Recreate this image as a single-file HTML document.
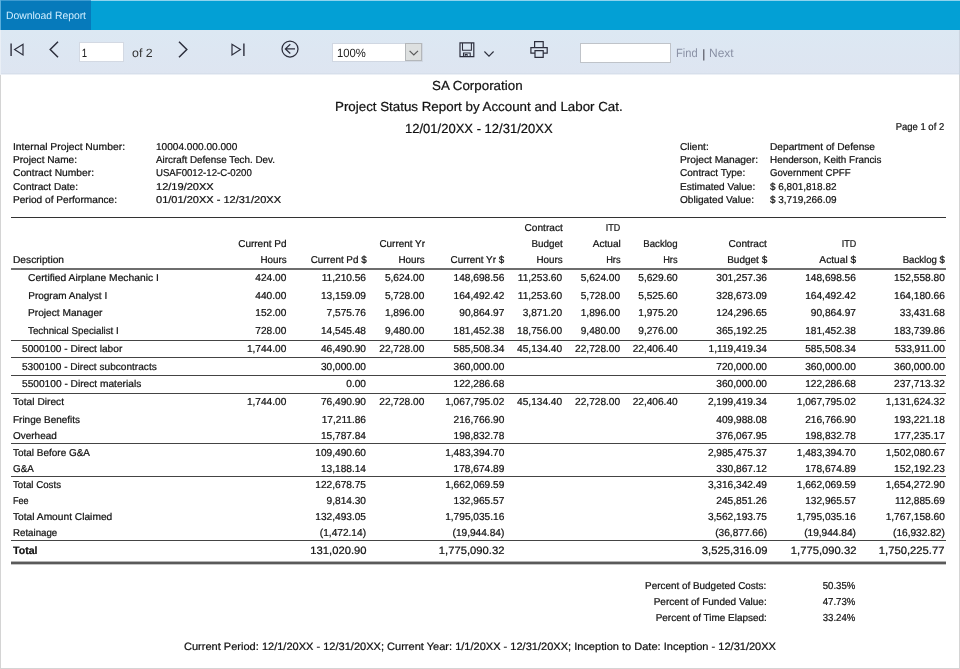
<!DOCTYPE html>
<html><head><meta charset="utf-8"><title>Report</title>
<style>
html,body{margin:0;padding:0;}
body{width:960px;height:669px;position:relative;overflow:hidden;background:#fff;font-family:"Liberation Sans",sans-serif;text-rendering:geometricPrecision;}
.t{position:absolute;white-space:nowrap;line-height:20px;height:20px;-webkit-text-stroke:0.22px currentColor;}
.hl{position:absolute;}
.abs{position:absolute;}
#frame{position:absolute;left:0;top:75px;width:958px;height:593px;border:1px solid #d4d4d4;border-top:none;}
#bar{position:absolute;left:0;top:0;width:960px;height:30px;background:#03a0d5;border-top:1px solid #8ed3ee;box-sizing:border-box;}
#tab{position:absolute;left:1px;top:0;width:90px;height:30px;background:#067abb;border-top:1px solid #3f9bd0;box-sizing:border-box;}
#tool{position:absolute;left:1px;top:30px;width:958px;height:44px;background:linear-gradient(#dce8f3,#dee5f1);}
.inp{position:absolute;background:#fff;border:1px solid #c4c8d0;box-sizing:border-box;}
svg{position:absolute;overflow:visible;}
#wrap{position:absolute;left:0;top:0;width:960px;height:669px;will-change:transform;}
.ns{-webkit-text-stroke:0 !important;}
</style></head><body><div id="wrap">
<div id="frame"></div>
<div id="bar"></div><div id="tab"></div><div id="tool"></div>
<div class="abs" style="left:0;top:0;width:1px;height:30px;background:#5aaedb"></div><div class="abs" style="left:0;top:30px;width:1px;height:45px;background:#eaeff6"></div><div class="abs" style="left:959px;top:30px;width:1px;height:45px;background:#ccd5e0"></div>

<div class="t ns" style="top:6.00px;font-size:10.5px;color:#cfeeff;left:6.00px;transform:scaleX(0.9861);transform-origin:0 50%;">Download Report</div>
<div class="abs" style="left:1px;top:73px;width:958px;height:1px;background:#d7dfeb"></div>
<div class="abs" style="left:1px;top:74px;width:958px;height:1px;background:#ecf0f6"></div>
<svg style="left:9px;top:42px" width="16" height="16" viewBox="0 0 16 16"><path d="M2.1 1.5v12.4" stroke="#2c2e3c" stroke-width="1.4" fill="none"/><path d="M14 2.3v10.6L5.6 7.6z" stroke="#2c2e3c" stroke-width="1.2" fill="none" stroke-linejoin="miter"/></svg>
<svg style="left:48px;top:40px" width="12" height="18" viewBox="0 0 12 18"><path d="M10 1.8L2.2 9.5l7.8 7.7" stroke="#2c2e3c" stroke-width="1.5" fill="none"/></svg>
<div class="inp" style="left:79px;top:42px;width:45px;height:20px;border-color:#d3d9e3"></div>
<div class="t" style="top:43.00px;font-size:12px;color:#222;left:82.00px;transform:scaleX(0.7327);transform-origin:0 50%;">1</div>
<div class="t ns" style="top:43.00px;font-size:12px;color:#333;left:131.70px;transform:scaleX(1.0334);transform-origin:0 50%;">of 2</div>
<svg style="left:177px;top:40px" width="12" height="18" viewBox="0 0 12 18"><path d="M2 1.8l7.8 7.7L2 17.2" stroke="#2c2e3c" stroke-width="1.5" fill="none"/></svg>
<svg style="left:230px;top:42px" width="16" height="16" viewBox="0 0 16 16"><path d="M13.9 1.5v12.4" stroke="#2c2e3c" stroke-width="1.4" fill="none"/><path d="M2 2.3v10.6l8.4-5.3z" stroke="#2c2e3c" stroke-width="1.2" fill="none"/></svg>
<svg style="left:281.3px;top:40.3px" width="18" height="18" viewBox="0 0 18 18"><circle cx="9" cy="9" r="8" stroke="#2c2e3c" stroke-width="1.25" fill="none"/><path d="M14 8.9H4.6M9.3 4.3L4.4 8.9l4.9 4.6" stroke="#2c2e3c" stroke-width="1.25" fill="none"/></svg>
<div class="inp" style="left:332px;top:43px;width:91px;height:19px;border-color:#d0d7e2"></div>
<div class="abs" style="left:405px;top:43px;width:17px;height:18px;background:#dde0e0;border:1px solid #b4b7ba;box-sizing:border-box"></div>
<svg style="left:409px;top:49.6px" width="10" height="6" viewBox="0 0 10 6"><path d="M0.6 0.8l4.2 4.2L9 0.8" stroke="#5a5a5a" stroke-width="1.2" fill="none"/></svg>
<div class="t ns" style="top:43.00px;font-size:12px;color:#222;left:337.00px;transform:scaleX(0.9418);transform-origin:0 50%;">100%</div>
<svg style="left:458.5px;top:41.7px" width="16" height="16" viewBox="0 0 16 16"><path d="M1 0.9h13.8v13.7H1z" stroke="#2c2e3c" stroke-width="1.2" fill="none"/><path d="M3.5 0.9v7.3h8.9V0.9M4.5 14.6v-3.7h6.7v3.7M6.2 14.6v-2.2h1.9v2.2" stroke="#2c2e3c" stroke-width="1.05" fill="none"/></svg>
<svg style="left:484px;top:50.6px" width="10" height="6" viewBox="0 0 10 6"><path d="M0.4 0.5l4.6 4.7L9.6 0.5" stroke="#2c2e3c" stroke-width="1.1" fill="none"/></svg>
<svg style="left:530px;top:41px" width="18" height="17" viewBox="0 0 18 17"><path d="M4.6 6.3V0.7h8.6v5.6M5 12.2H0.9V6.6h16.3v5.6H13M5 9.6h8.2v6.7H5z" stroke="#2c2e3c" stroke-width="1.2" fill="none"/></svg>
<div class="inp" style="left:580px;top:43px;width:91px;height:20px;border-color:#bfc3c9"></div>
<div class="t ns" style="top:43.00px;font-size:12px;color:#8a91a5;left:675.80px;transform:scaleX(0.9253);transform-origin:0 50%;">Find</div>
<div class="t ns" style="top:44.00px;font-size:12px;color:#3a3a44;left:702.30px;">|</div>
<div class="t ns" style="top:43.00px;font-size:12px;color:#8a91a5;left:709.20px;transform:scaleX(0.9965);transform-origin:0 50%;">Next</div>
<div class="t" style="top:76.00px;font-size:13.1px;color:#111;left:432.00px;transform:scaleX(1.0201);transform-origin:0 50%;">SA Corporation</div>
<div class="t" style="top:97.00px;font-size:13.1px;color:#111;left:335.00px;transform:scaleX(1.0187);transform-origin:0 50%;">Project Status Report by Account and Labor Cat.</div>
<div class="t" style="top:119.00px;font-size:13.1px;color:#111;left:404.70px;transform:scaleX(0.9939);transform-origin:0 50%;">12/01/20XX - 12/31/20XX</div>
<div class="t" style="top:118.00px;font-size:10px;color:#111;right:15.90px;transform:scaleX(0.9461);transform-origin:100% 50%;">Page 1 of 2</div>
<div class="t" style="top:138.00px;font-size:10px;color:#111;left:13.00px;transform:scaleX(1.0334);transform-origin:0 50%;">Internal Project Number:</div>
<div class="t" style="top:138.00px;font-size:10px;color:#111;left:155.50px;transform:scaleX(1.0078);transform-origin:0 50%;">10004.000.00.000</div>
<div class="t" style="top:151.00px;font-size:10px;color:#111;left:13.00px;transform:scaleX(1.0104);transform-origin:0 50%;">Project Name:</div>
<div class="t" style="top:151.00px;font-size:10px;color:#111;left:155.50px;transform:scaleX(0.9853);transform-origin:0 50%;">Aircraft Defense Tech. Dev.</div>
<div class="t" style="top:164.00px;font-size:10px;color:#111;left:13.00px;transform:scaleX(1.0265);transform-origin:0 50%;">Contract Number:</div>
<div class="t" style="top:164.00px;font-size:10px;color:#111;left:155.50px;transform:scaleX(0.9623);transform-origin:0 50%;">USAF0012-12-C-0200</div>
<div class="t" style="top:178.00px;font-size:10px;color:#111;left:13.00px;transform:scaleX(1.0082);transform-origin:0 50%;">Contract Date:</div>
<div class="t" style="top:178.00px;font-size:10px;color:#111;left:155.50px;transform:scaleX(1.1046);transform-origin:0 50%;">12/19/20XX</div>
<div class="t" style="top:191.00px;font-size:10px;color:#111;left:13.00px;transform:scaleX(1.0116);transform-origin:0 50%;">Period of Performance:</div>
<div class="t" style="top:191.00px;font-size:10px;color:#111;left:155.50px;transform:scaleX(1.1022);transform-origin:0 50%;">01/01/20XX - 12/31/20XX</div>
<div class="t" style="top:138.00px;font-size:10px;color:#111;left:680.00px;transform:scaleX(1.0143);transform-origin:0 50%;">Client:</div>
<div class="t" style="top:138.00px;font-size:10px;color:#111;left:769.70px;transform:scaleX(1.0157);transform-origin:0 50%;">Department of Defense</div>
<div class="t" style="top:151.00px;font-size:10px;color:#111;left:680.00px;transform:scaleX(1.0242);transform-origin:0 50%;">Project Manager:</div>
<div class="t" style="top:151.00px;font-size:10px;color:#111;left:769.70px;transform:scaleX(0.9881);transform-origin:0 50%;">Henderson, Keith Francis</div>
<div class="t" style="top:164.00px;font-size:10px;color:#111;left:680.00px;transform:scaleX(1.0063);transform-origin:0 50%;">Contract Type:</div>
<div class="t" style="top:164.00px;font-size:10px;color:#111;left:769.70px;transform:scaleX(0.9594);transform-origin:0 50%;">Government CPFF</div>
<div class="t" style="top:178.00px;font-size:10px;color:#111;left:680.00px;transform:scaleX(1.0054);transform-origin:0 50%;">Estimated Value:</div>
<div class="t" style="top:178.00px;font-size:10px;color:#111;left:769.70px;transform:scaleX(0.9967);transform-origin:0 50%;">$ 6,801,818.82</div>
<div class="t" style="top:191.00px;font-size:10px;color:#111;left:680.00px;transform:scaleX(1.0111);transform-origin:0 50%;">Obligated Value:</div>
<div class="t" style="top:191.00px;font-size:10px;color:#111;left:769.70px;transform:scaleX(0.9967);transform-origin:0 50%;">$ 3,719,266.09</div>
<div class="hl" style="left:11px;top:217px;width:935px;height:1px;background:#333"></div>
<div class="t" style="top:235.00px;font-size:10px;color:#111;right:673.49px;">Current Pd</div>
<div class="t" style="top:251.00px;font-size:10px;color:#111;right:673.51px;transform:scaleX(0.9836);transform-origin:100% 50%;">Hours</div>
<div class="t" style="top:251.00px;font-size:10px;color:#111;right:593.79px;transform:scaleX(0.9879);transform-origin:100% 50%;">Current Pd $</div>
<div class="t" style="top:235.00px;font-size:10px;color:#111;right:535.50px;transform:scaleX(0.9905);transform-origin:100% 50%;">Current Yr</div>
<div class="t" style="top:251.00px;font-size:10px;color:#111;right:535.51px;transform:scaleX(0.9836);transform-origin:100% 50%;">Hours</div>
<div class="t" style="top:251.00px;font-size:10px;color:#111;right:455.50px;transform:scaleX(0.9902);transform-origin:100% 50%;">Current Yr $</div>
<div class="t" style="top:219.00px;font-size:10px;color:#111;right:397.69px;transform:scaleX(1.0124);transform-origin:100% 50%;">Contract</div>
<div class="t" style="top:235.00px;font-size:10px;color:#111;right:397.69px;transform:scaleX(0.9862);transform-origin:100% 50%;">Budget</div>
<div class="t" style="top:251.00px;font-size:10px;color:#111;right:397.71px;transform:scaleX(0.9836);transform-origin:100% 50%;">Hours</div>
<div class="t" style="top:219.00px;font-size:10px;color:#111;right:339.69px;transform:scaleX(0.8948);transform-origin:100% 50%;">ITD</div>
<div class="t" style="top:235.00px;font-size:10px;color:#111;right:339.69px;transform:scaleX(1.0079);transform-origin:100% 50%;">Actual</div>
<div class="t" style="top:251.00px;font-size:10px;color:#111;right:339.71px;transform:scaleX(0.9253);transform-origin:100% 50%;">Hrs</div>
<div class="t" style="top:235.00px;font-size:10px;color:#111;right:282.09px;transform:scaleX(0.9631);transform-origin:100% 50%;">Backlog</div>
<div class="t" style="top:251.00px;font-size:10px;color:#111;right:282.11px;transform:scaleX(0.9253);transform-origin:100% 50%;">Hrs</div>
<div class="t" style="top:235.00px;font-size:10px;color:#111;right:192.79px;transform:scaleX(1.0124);transform-origin:100% 50%;">Contract</div>
<div class="t" style="top:251.00px;font-size:10px;color:#111;right:192.80px;">Budget $</div>
<div class="t" style="top:235.00px;font-size:10px;color:#111;right:103.89px;transform:scaleX(0.8948);transform-origin:100% 50%;">ITD</div>
<div class="t" style="top:251.00px;font-size:10px;color:#111;right:103.89px;transform:scaleX(1.0173);transform-origin:100% 50%;">Actual $</div>
<div class="t" style="top:251.00px;font-size:10px;color:#111;right:14.99px;transform:scaleX(0.9623);transform-origin:100% 50%;">Backlog $</div>
<div class="t" style="top:251.00px;font-size:10px;color:#111;left:13.00px;transform:scaleX(1.0194);transform-origin:0 50%;">Description</div>
<div class="hl" style="left:11px;top:268px;width:935px;height:2px;background:#6e6e6e"></div>
<div class="t" style="top:269.00px;font-size:10px;color:#111;left:28.25px;transform:scaleX(1.0273);transform-origin:0 50%;">Certified Airplane Mechanic I</div>
<div class="t" style="top:269.00px;font-size:10.15px;color:#111;right:673.70px;">424.00</div>
<div class="t" style="top:269.00px;font-size:10.15px;color:#111;right:594.01px;">11,210.56</div>
<div class="t" style="top:269.00px;font-size:10.15px;color:#111;right:535.70px;">5,624.00</div>
<div class="t" style="top:269.00px;font-size:10.15px;color:#111;right:455.71px;">148,698.56</div>
<div class="t" style="top:269.00px;font-size:10.15px;color:#111;right:397.91px;">11,253.60</div>
<div class="t" style="top:269.00px;font-size:10.15px;color:#111;right:339.90px;">5,624.00</div>
<div class="t" style="top:269.00px;font-size:10.15px;color:#111;right:282.30px;">5,629.60</div>
<div class="t" style="top:269.00px;font-size:10.15px;color:#111;right:193.01px;">301,257.36</div>
<div class="t" style="top:269.00px;font-size:10.15px;color:#111;right:104.11px;">148,698.56</div>
<div class="t" style="top:269.00px;font-size:10.15px;color:#111;right:15.21px;">152,558.80</div>
<div class="t" style="top:287.00px;font-size:10px;color:#111;left:28.25px;">Program Analyst I</div>
<div class="t" style="top:287.00px;font-size:10.15px;color:#111;right:673.70px;">440.00</div>
<div class="t" style="top:287.00px;font-size:10.15px;color:#111;right:594.00px;">13,159.09</div>
<div class="t" style="top:287.00px;font-size:10.15px;color:#111;right:535.70px;">5,728.00</div>
<div class="t" style="top:287.00px;font-size:10.15px;color:#111;right:455.71px;">164,492.42</div>
<div class="t" style="top:287.00px;font-size:10.15px;color:#111;right:397.91px;">11,253.60</div>
<div class="t" style="top:287.00px;font-size:10.15px;color:#111;right:339.90px;">5,728.00</div>
<div class="t" style="top:287.00px;font-size:10.15px;color:#111;right:282.30px;">5,525.60</div>
<div class="t" style="top:287.00px;font-size:10.15px;color:#111;right:193.01px;">328,673.09</div>
<div class="t" style="top:287.00px;font-size:10.15px;color:#111;right:104.11px;">164,492.42</div>
<div class="t" style="top:287.00px;font-size:10.15px;color:#111;right:15.21px;">164,180.66</div>
<div class="t" style="top:304.00px;font-size:10px;color:#111;left:28.25px;transform:scaleX(1.0153);transform-origin:0 50%;">Project Manager</div>
<div class="t" style="top:304.00px;font-size:10.15px;color:#111;right:673.70px;">152.00</div>
<div class="t" style="top:304.00px;font-size:10.15px;color:#111;right:594.00px;">7,575.76</div>
<div class="t" style="top:304.00px;font-size:10.15px;color:#111;right:535.70px;">1,896.00</div>
<div class="t" style="top:304.00px;font-size:10.15px;color:#111;right:455.70px;">90,864.97</div>
<div class="t" style="top:304.00px;font-size:10.15px;color:#111;right:397.90px;">3,871.20</div>
<div class="t" style="top:304.00px;font-size:10.15px;color:#111;right:339.90px;">1,896.00</div>
<div class="t" style="top:304.00px;font-size:10.15px;color:#111;right:282.30px;">1,975.20</div>
<div class="t" style="top:304.00px;font-size:10.15px;color:#111;right:193.01px;">124,296.65</div>
<div class="t" style="top:304.00px;font-size:10.15px;color:#111;right:104.10px;">90,864.97</div>
<div class="t" style="top:304.00px;font-size:10.15px;color:#111;right:15.20px;">33,431.68</div>
<div class="t" style="top:322.00px;font-size:10px;color:#111;left:28.25px;transform:scaleX(0.9778);transform-origin:0 50%;">Technical Specialist I</div>
<div class="t" style="top:322.00px;font-size:10.15px;color:#111;right:673.70px;">728.00</div>
<div class="t" style="top:322.00px;font-size:10.15px;color:#111;right:594.00px;">14,545.48</div>
<div class="t" style="top:322.00px;font-size:10.15px;color:#111;right:535.70px;">9,480.00</div>
<div class="t" style="top:322.00px;font-size:10.15px;color:#111;right:455.71px;">181,452.38</div>
<div class="t" style="top:322.00px;font-size:10.15px;color:#111;right:397.90px;">18,756.00</div>
<div class="t" style="top:322.00px;font-size:10.15px;color:#111;right:339.90px;">9,480.00</div>
<div class="t" style="top:322.00px;font-size:10.15px;color:#111;right:282.30px;">9,276.00</div>
<div class="t" style="top:322.00px;font-size:10.15px;color:#111;right:193.01px;">365,192.25</div>
<div class="t" style="top:322.00px;font-size:10.15px;color:#111;right:104.11px;">181,452.38</div>
<div class="t" style="top:322.00px;font-size:10.15px;color:#111;right:15.21px;">183,739.86</div>
<div class="t" style="top:340.00px;font-size:10px;color:#111;left:22.25px;transform:scaleX(1.0133);transform-origin:0 50%;">5000100 - Direct labor</div>
<div class="t" style="top:340.00px;font-size:10.15px;color:#111;right:673.70px;">1,744.00</div>
<div class="t" style="top:340.00px;font-size:10.15px;color:#111;right:594.00px;">46,490.90</div>
<div class="t" style="top:340.00px;font-size:10.15px;color:#111;right:535.70px;">22,728.00</div>
<div class="t" style="top:340.00px;font-size:10.15px;color:#111;right:455.71px;">585,508.34</div>
<div class="t" style="top:340.00px;font-size:10.15px;color:#111;right:397.90px;">45,134.40</div>
<div class="t" style="top:340.00px;font-size:10.15px;color:#111;right:339.90px;">22,728.00</div>
<div class="t" style="top:340.00px;font-size:10.15px;color:#111;right:282.30px;">22,406.40</div>
<div class="t" style="top:340.00px;font-size:10.15px;color:#111;right:193.02px;">1,119,419.34</div>
<div class="t" style="top:340.00px;font-size:10.15px;color:#111;right:104.11px;">585,508.34</div>
<div class="t" style="top:340.00px;font-size:10.15px;color:#111;right:15.19px;">533,911.00</div>
<div class="t" style="top:358.00px;font-size:10px;color:#111;left:22.25px;transform:scaleX(1.0101);transform-origin:0 50%;">5300100 - Direct subcontracts</div>
<div class="t" style="top:358.00px;font-size:10.15px;color:#111;right:594.00px;">30,000.00</div>
<div class="t" style="top:358.00px;font-size:10.15px;color:#111;right:455.71px;">360,000.00</div>
<div class="t" style="top:358.00px;font-size:10.15px;color:#111;right:193.01px;">720,000.00</div>
<div class="t" style="top:358.00px;font-size:10.15px;color:#111;right:104.11px;">360,000.00</div>
<div class="t" style="top:358.00px;font-size:10.15px;color:#111;right:15.21px;">360,000.00</div>
<div class="t" style="top:375.00px;font-size:10px;color:#111;left:22.25px;transform:scaleX(1.0168);transform-origin:0 50%;">5500100 - Direct materials</div>
<div class="t" style="top:375.00px;font-size:10.15px;color:#111;right:594.01px;">0.00</div>
<div class="t" style="top:375.00px;font-size:10.15px;color:#111;right:455.71px;">122,286.68</div>
<div class="t" style="top:375.00px;font-size:10.15px;color:#111;right:193.01px;">360,000.00</div>
<div class="t" style="top:375.00px;font-size:10.15px;color:#111;right:104.11px;">122,286.68</div>
<div class="t" style="top:375.00px;font-size:10.15px;color:#111;right:15.21px;">237,713.32</div>
<div class="t" style="top:393.00px;font-size:10px;color:#111;left:13.00px;transform:scaleX(1.0200);transform-origin:0 50%;">Total Direct</div>
<div class="t" style="top:393.00px;font-size:10.15px;color:#111;right:673.70px;">1,744.00</div>
<div class="t" style="top:393.00px;font-size:10.15px;color:#111;right:594.00px;">76,490.90</div>
<div class="t" style="top:393.00px;font-size:10.15px;color:#111;right:535.70px;">22,728.00</div>
<div class="t" style="top:393.00px;font-size:10.15px;color:#111;right:455.71px;">1,067,795.02</div>
<div class="t" style="top:393.00px;font-size:10.15px;color:#111;right:397.90px;">45,134.40</div>
<div class="t" style="top:393.00px;font-size:10.15px;color:#111;right:339.90px;">22,728.00</div>
<div class="t" style="top:393.00px;font-size:10.15px;color:#111;right:282.30px;">22,406.40</div>
<div class="t" style="top:393.00px;font-size:10.15px;color:#111;right:193.01px;">2,199,419.34</div>
<div class="t" style="top:393.00px;font-size:10.15px;color:#111;right:104.11px;">1,067,795.02</div>
<div class="t" style="top:393.00px;font-size:10.15px;color:#111;right:15.21px;">1,131,624.32</div>
<div class="t" style="top:411.00px;font-size:10px;color:#111;left:13.00px;transform:scaleX(0.9963);transform-origin:0 50%;">Fringe Benefits</div>
<div class="t" style="top:411.00px;font-size:10.15px;color:#111;right:594.01px;">17,211.86</div>
<div class="t" style="top:411.00px;font-size:10.15px;color:#111;right:455.71px;">216,766.90</div>
<div class="t" style="top:411.00px;font-size:10.15px;color:#111;right:193.01px;">409,988.08</div>
<div class="t" style="top:411.00px;font-size:10.15px;color:#111;right:104.11px;">216,766.90</div>
<div class="t" style="top:411.00px;font-size:10.15px;color:#111;right:15.21px;">193,221.18</div>
<div class="t" style="top:427.00px;font-size:10px;color:#111;left:13.00px;transform:scaleX(0.9964);transform-origin:0 50%;">Overhead</div>
<div class="t" style="top:427.00px;font-size:10.15px;color:#111;right:594.00px;">15,787.84</div>
<div class="t" style="top:427.00px;font-size:10.15px;color:#111;right:455.71px;">198,832.78</div>
<div class="t" style="top:427.00px;font-size:10.15px;color:#111;right:193.01px;">376,067.95</div>
<div class="t" style="top:427.00px;font-size:10.15px;color:#111;right:104.11px;">198,832.78</div>
<div class="t" style="top:427.00px;font-size:10.15px;color:#111;right:15.21px;">177,235.17</div>
<div class="t" style="top:444.00px;font-size:10px;color:#111;left:13.00px;transform:scaleX(0.9968);transform-origin:0 50%;">Total Before G&amp;A</div>
<div class="t" style="top:444.00px;font-size:10.15px;color:#111;right:594.01px;">109,490.60</div>
<div class="t" style="top:444.00px;font-size:10.15px;color:#111;right:455.71px;">1,483,394.70</div>
<div class="t" style="top:444.00px;font-size:10.15px;color:#111;right:193.01px;">2,985,475.37</div>
<div class="t" style="top:444.00px;font-size:10.15px;color:#111;right:104.11px;">1,483,394.70</div>
<div class="t" style="top:444.00px;font-size:10.15px;color:#111;right:15.21px;">1,502,080.67</div>
<div class="t" style="top:460.00px;font-size:10px;color:#111;left:13.00px;transform:scaleX(0.9822);transform-origin:0 50%;">G&amp;A</div>
<div class="t" style="top:460.00px;font-size:10.15px;color:#111;right:594.00px;">13,188.14</div>
<div class="t" style="top:460.00px;font-size:10.15px;color:#111;right:455.71px;">178,674.89</div>
<div class="t" style="top:460.00px;font-size:10.15px;color:#111;right:193.01px;">330,867.12</div>
<div class="t" style="top:460.00px;font-size:10.15px;color:#111;right:104.11px;">178,674.89</div>
<div class="t" style="top:460.00px;font-size:10.15px;color:#111;right:15.21px;">152,192.23</div>
<div class="t" style="top:476.00px;font-size:10px;color:#111;left:13.00px;transform:scaleX(0.9703);transform-origin:0 50%;">Total Costs</div>
<div class="t" style="top:476.00px;font-size:10.15px;color:#111;right:594.01px;">122,678.75</div>
<div class="t" style="top:476.00px;font-size:10.15px;color:#111;right:455.71px;">1,662,069.59</div>
<div class="t" style="top:476.00px;font-size:10.15px;color:#111;right:193.01px;">3,316,342.49</div>
<div class="t" style="top:476.00px;font-size:10.15px;color:#111;right:104.11px;">1,662,069.59</div>
<div class="t" style="top:476.00px;font-size:10.15px;color:#111;right:15.21px;">1,654,272.90</div>
<div class="t" style="top:492.00px;font-size:10px;color:#111;left:13.00px;transform:scaleX(0.9002);transform-origin:0 50%;">Fee</div>
<div class="t" style="top:492.00px;font-size:10.15px;color:#111;right:594.00px;">9,814.30</div>
<div class="t" style="top:492.00px;font-size:10.15px;color:#111;right:455.71px;">132,965.57</div>
<div class="t" style="top:492.00px;font-size:10.15px;color:#111;right:193.01px;">245,851.26</div>
<div class="t" style="top:492.00px;font-size:10.15px;color:#111;right:104.11px;">132,965.57</div>
<div class="t" style="top:492.00px;font-size:10.15px;color:#111;right:15.19px;">112,885.69</div>
<div class="t" style="top:508.00px;font-size:10px;color:#111;left:13.00px;transform:scaleX(1.0202);transform-origin:0 50%;">Total Amount Claimed</div>
<div class="t" style="top:508.00px;font-size:10.15px;color:#111;right:594.01px;">132,493.05</div>
<div class="t" style="top:508.00px;font-size:10.15px;color:#111;right:455.71px;">1,795,035.16</div>
<div class="t" style="top:508.00px;font-size:10.15px;color:#111;right:193.01px;">3,562,193.75</div>
<div class="t" style="top:508.00px;font-size:10.15px;color:#111;right:104.11px;">1,795,035.16</div>
<div class="t" style="top:508.00px;font-size:10.15px;color:#111;right:15.21px;">1,767,158.60</div>
<div class="t" style="top:524.00px;font-size:10px;color:#111;left:13.00px;transform:scaleX(0.9705);transform-origin:0 50%;">Retainage</div>
<div class="t" style="top:524.00px;font-size:10.15px;color:#111;right:594.01px;">(1,472.14)</div>
<div class="t" style="top:524.00px;font-size:10.15px;color:#111;right:455.69px;">(19,944.84)</div>
<div class="t" style="top:524.00px;font-size:10.15px;color:#111;right:192.99px;">(36,877.66)</div>
<div class="t" style="top:524.00px;font-size:10.15px;color:#111;right:104.09px;">(19,944.84)</div>
<div class="t" style="top:524.00px;font-size:10.15px;color:#111;right:15.19px;">(16,932.82)</div>
<div class="t" style="top:541.00px;font-size:10.7px;color:#111;font-weight:bold;left:13.00px;transform:scaleX(0.9899);transform-origin:0 50%;">Total</div>
<div class="t" style="top:541.00px;font-size:10.7px;color:#111;right:594.01px;transform:scaleX(1.0501);transform-origin:100% 50%;">131,020.90</div>
<div class="t" style="top:541.00px;font-size:10.7px;color:#111;right:455.70px;transform:scaleX(1.0502);transform-origin:100% 50%;">1,775,090.32</div>
<div class="t" style="top:541.00px;font-size:10.7px;color:#111;right:193.00px;transform:scaleX(1.0502);transform-origin:100% 50%;">3,525,316.09</div>
<div class="t" style="top:541.00px;font-size:10.7px;color:#111;right:104.10px;transform:scaleX(1.0502);transform-origin:100% 50%;">1,775,090.32</div>
<div class="t" style="top:541.00px;font-size:10.7px;color:#111;right:15.20px;transform:scaleX(1.0502);transform-origin:100% 50%;">1,750,225.77</div>
<div class="hl" style="left:11px;top:340px;width:935px;height:1px;background:#444"></div>
<div class="hl" style="left:11px;top:357px;width:935px;height:1px;background:#444"></div>
<div class="hl" style="left:11px;top:375px;width:935px;height:1px;background:#444"></div>
<div class="hl" style="left:11px;top:393px;width:935px;height:1px;background:#444"></div>
<div class="hl" style="left:11px;top:443px;width:935px;height:1px;background:#444"></div>
<div class="hl" style="left:11px;top:476px;width:935px;height:1px;background:#444"></div>
<div class="hl" style="left:11px;top:540px;width:935px;height:1px;background:#444"></div>
<div class="hl" style="left:11px;top:561px;width:935px;height:1px;background:#b4b4b4"></div>
<div class="hl" style="left:11px;top:562px;width:935px;height:2px;background:#5a5a5a"></div>
<div class="hl" style="left:11px;top:564px;width:935px;height:1px;background:#c4c4c4"></div>
<div class="t" style="top:577.00px;font-size:10px;color:#111;right:193.24px;transform:scaleX(0.9916);transform-origin:100% 50%;">Percent of Budgeted Costs:</div>
<div class="t" style="top:577.00px;font-size:10.15px;color:#111;right:104.24px;transform:scaleX(0.9510);transform-origin:100% 50%;">50.35%</div>
<div class="t" style="top:593.00px;font-size:10px;color:#111;right:193.24px;transform:scaleX(1.0031);transform-origin:100% 50%;">Percent of Funded Value:</div>
<div class="t" style="top:593.00px;font-size:10.15px;color:#111;right:104.24px;transform:scaleX(0.9510);transform-origin:100% 50%;">47.73%</div>
<div class="t" style="top:609.00px;font-size:10px;color:#111;right:193.25px;transform:scaleX(0.9936);transform-origin:100% 50%;">Percent of Time Elapsed:</div>
<div class="t" style="top:609.00px;font-size:10.15px;color:#111;right:104.24px;transform:scaleX(0.9510);transform-origin:100% 50%;">33.24%</div>
<div class="t" style="top:637.00px;font-size:10.7px;color:#111;left:183.75px;transform:scaleX(1.0325);transform-origin:0 50%;">Current Period: 12/1/20XX - 12/31/20XX; Current Year: 1/1/20XX - 12/31/20XX; Inception to Date: Inception - 12/31/20XX</div>
</div></body></html>
